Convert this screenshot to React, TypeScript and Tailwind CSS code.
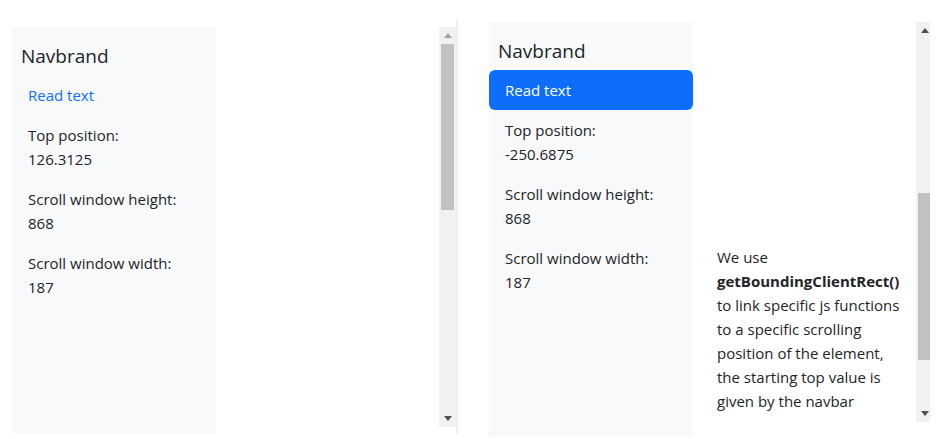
const Arrow = ({ up, color }: { up?: boolean; color: string }) => (
  <div className="flex h-[17px] w-[17px] shrink-0 items-center justify-center">
    <svg width="8" height="5" viewBox="0 0 8 5">
      {up ? (
        <polygon points="0,5 8,5 4,0" fill={color} />
      ) : (
        <polygon points="0,0 8,0 4,5" fill={color} />
      )}
    </svg>
  </div>
);

const NavPanel = ({ top, active }: { top: string; active?: boolean }) => (
  <div className="flex h-full w-[204px] shrink-0 flex-col bg-[#f8f9fa] pt-[9px]">
    <div className="ml-[9px] pb-[4px] pt-[5px] text-[19px] leading-[30px] text-[#212529]">Navbrand</div>
    <div
      className={
        active
          ? "rounded-[6px] bg-[#0d6efd] px-4 py-2 text-white"
          : "px-4 py-2 text-[#0d6efd]"
      }
    >
      Read text
    </div>
    <div className="px-4 py-2">
      Top position:
      <br />
      {top}
    </div>
    <div className="px-4 py-2">
      Scroll window height:
      <br />
      868
    </div>
    <div className="px-4 py-2">
      Scroll window width:
      <br />
      187
    </div>
  </div>
);

export default function App() {
  return (
    <div className="flex h-[439px] w-[950px] bg-white font-['Open_Sans',sans-serif] text-[15px] leading-6 text-[#212529]">
      {/* left frame */}
      <div className="flex w-[456px] shrink-0 pl-[12px] pt-[27px]">
        <div className="h-[407px]">
          <NavPanel top="126.3125" />
        </div>
        <div className="flex-1" />
        <div className="flex h-[400px] w-[17px] flex-col bg-[#f1f1f1]">
          <Arrow up color="#a3a3a3" />
          <div className="ml-[2px] h-[166px] w-[13px] bg-[#c1c1c1]" />
          <div className="flex-1" />
          <Arrow color="#505050" />
        </div>
      </div>

      {/* divider */}
      <div className="mt-[19px] h-[415px] w-[2px] shrink-0 bg-[#f0f0f0]" />

      {/* right frame */}
      <div className="flex flex-1 pl-[31px] pt-[22px]">
        <div className="h-[415px]">
          <NavPanel top="-250.6875" active />
        </div>
        <div className="flex-1 whitespace-nowrap pl-[24px] pt-[223px]">
          We use
          <br />
          <span className="font-bold">getBoundingClientRect()</span>
          <br />
          to link specific js functions
          <br />
          to a specific scrolling
          <br />
          position of the element,
          <br />
          the starting top value is
          <br />
          given by the navbar
        </div>
        <div className="mr-[20px] flex h-[400px] w-[14px] flex-col overflow-hidden bg-[#f1f1f1]">
          <Arrow up color="#505050" />
          <div className="ml-[2px] mt-[154px] h-[167px] w-[12px] shrink-0 bg-[#c1c1c1]" />
          <div className="flex-1" />
          <Arrow color="#505050" />
        </div>
      </div>
    </div>
  );
}
